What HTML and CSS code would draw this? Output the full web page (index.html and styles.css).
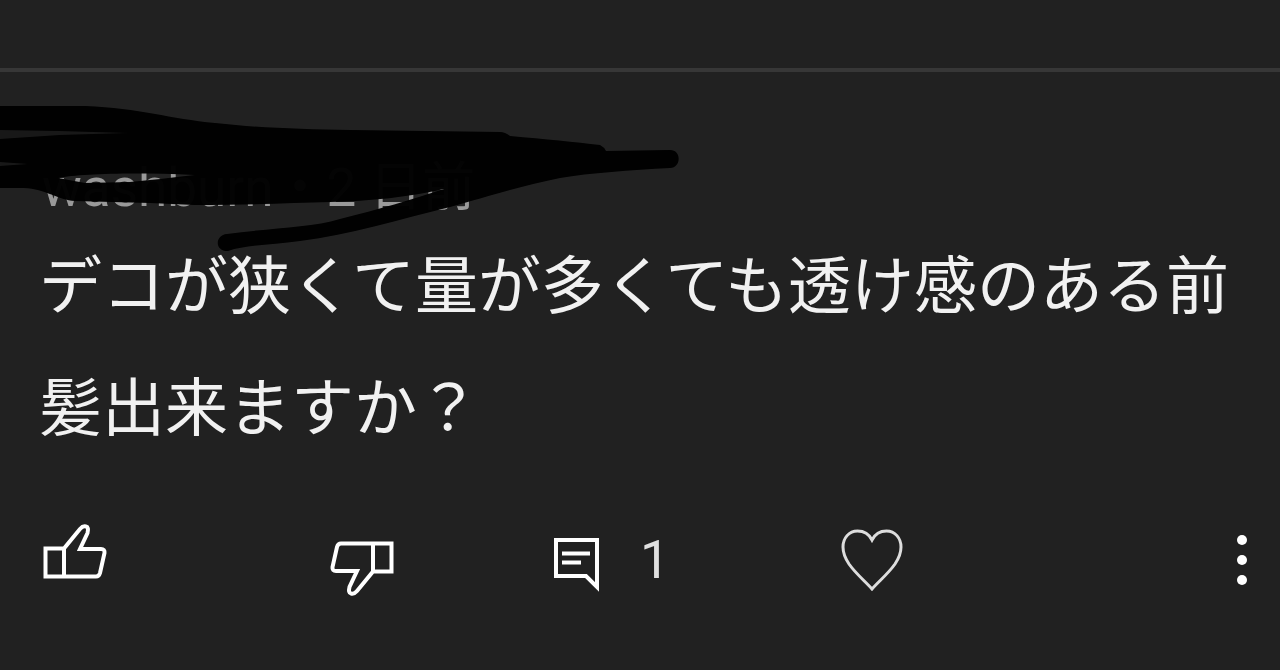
FILE: index.html
```html
<!DOCTYPE html>
<html lang="ja">
<head>
  <meta charset="UTF-8">
  <meta name="viewport" content="width=device-width, initial-scale=1">
  <title>コメント</title>
  <link rel="stylesheet" href="styles.css">
</head>
<body>

  <main class="comments">
    <article class="comment">
      <header class="meta">washburn・2 日前</header>

      <!-- marker over the user name -->
      <svg class="scribble" width="700" height="160" viewBox="0 100 700 160" aria-hidden="true">
        <path fill-rule="evenodd" d="M0 106 H85 C140 108 170 119 215 123 C260 128 300 129 350 130 L500 132 Q505 132 510 136 C545 139 575 142 600 145 Q604 147 606 151 L670 150 C682 150 681 168 670 168 C630 170 590 173 560 178 C520 186 490 196 450 207 C400 219 350 235 300 241 C270 245 245 245 228 251 C214 251 215 235 227 234 C270 228 310 228 340 219 C380 209 410 200 444 189 C410 197 370 201 330 202 C290 203 245 205 195 205 L150 203 L75 201 C58 200 46 189 24 188 H0 Z
          M58 178 C80 174 130 172 195 175 C170 178 150 180 130 182 L85 183 Z"/>
        <path class="streak" d="M0 130 L60 131 L128 133 L60 135 L0 139 Z M0 162 L28 164 L0 166 Z"/>
      </svg>

      <p class="text">デコが狭くて量が多くても透け感のある前髪出来ますか？</p>

      <div class="actions">
        <button class="like" type="button" aria-label="高評価">
          <svg width="64" height="56" viewBox="0 0 64 56">
            <path d="M21 25.5 H2.5 V53.5 H53 Q56 53.5 57 50 L61.500 30 Q62 26 58 26 H37 L44.500 10 Q46 4 43 3.500 Q40 2.500 37 6 L21 25.500 V53.5"/>
          </svg>
        </button>
        <button class="dislike" type="button" aria-label="低評価">
          <svg width="64" height="56" viewBox="0 0 64 56">
            <path transform="rotate(180 32 28)" d="M21 25.5 H2.5 V53.5 H53 Q56 53.5 57 50 L61.500 30 Q62 26 58 26 H37 L44.500 10 Q46 4 43 3.500 Q40 2.500 37 6 L21 25.500 V53.5"/>
          </svg>
        </button>
        <button class="reply" type="button" aria-label="返信 1 件">
          <svg width="48" height="64" viewBox="0 -8 48 64">
            <path d="M4 4 H45 V51 L34 40 H4 Z M10 17.500 H38 M10 26.500 H29"/>
          </svg>
          <span>1</span>
        </button>
        <button class="heart" type="button" aria-label="ハート">
          <svg width="62" height="62" viewBox="0 0 62 62">
            <path d="M31 60 C24 52 15 45 8 35 C4 29 2 25 2 18 C2 9 8 2 16.500 2 C23 2 28 5 31 11 C34 5 39 2 45.500 2 C54 2 60 9 60 18 C60 25 58 29 54 35 C47 45 38 52 31 60 Z"/>
          </svg>
        </button>
        <button class="more" type="button" aria-label="その他">
          <svg width="12" height="52" viewBox="0 0 12 52">
            <circle cx="6" cy="6" r="5"/>
            <circle cx="6" cy="26" r="5"/>
            <circle cx="6" cy="46" r="5"/>
          </svg>
        </button>
      </div>
    </article>
  </main>

</body>
</html>
```
FILE: styles.css
```css
* {
  box-sizing: border-box;
}
body {
  margin: 0;
  background-color: #212121;
  color: #f1f1f1;
  font-family: Roboto, "Noto Sans CJK JP", sans-serif;
}
.comments {
  padding-top: 68px;
}
.comment {
  position: relative;
  border-top: 4px solid #373737;
  padding-top: 84px;
}
.meta {
  padding-left: 42px;
  font-size: 53px;
  line-height: 64px;
  color: #999;
}
.scribble {
  position: absolute;
  top: 28px;
  left: 0;
  fill: #000;
  opacity: 0.97;
}
.scribble .streak {
  fill: #181818;
}
.text {
  margin: 0;
  padding-left: 39px;
  font-family: "Noto Sans CJK JP", sans-serif;
  font-size: 63px;
  font-weight: 400;
  line-height: 122px;
}
.actions {
  display: grid;
  grid-template-columns: 287fr 222fr 289fr 395fr 12px;
  align-items: center;
  height: 74px;
  margin-top: 59px;
  padding: 0 32px 0 43px;
}
.actions button {
  display: flex;
  align-items: center;
  padding: 0;
  border: none;
  background: none;
  color: #e0e0e0;
  font-family: Roboto, sans-serif;
  font-size: 53px;
  line-height: 64px;
  cursor: pointer;
}
.actions svg {
  fill: none;
  stroke: #fff;
  stroke-width: 4;
}
.actions .like {
  align-self: start;
}
.actions .dislike {
  align-self: end;
}
.actions .reply {
  gap: 40px;
}
.actions .heart svg {
  stroke: #ddd;
  stroke-width: 3;
}
.actions .more svg {
  fill: #fff;
  stroke: none;
}
```
